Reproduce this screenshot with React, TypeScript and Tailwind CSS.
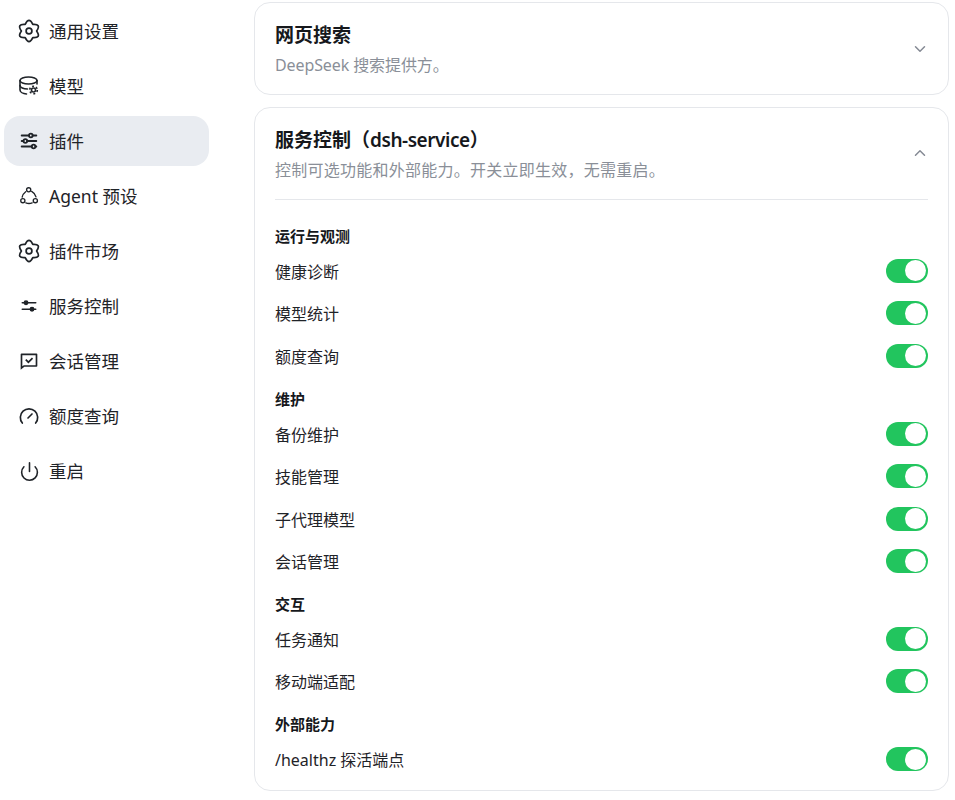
import { ChevronDown, ChevronUp, Power } from "lucide-react";
import { RiChatCheckLine } from "react-icons/ri";
import { TbAdjustmentsHorizontal } from "react-icons/tb";

function GearIcon() {
  return (
    <svg viewBox="0 0 24 24" width="24" height="24" fill="none" stroke="currentColor" strokeWidth="1.7" strokeLinejoin="round">
      <path d="M15.8 5.4Q24.6 4.75 19.6 12Q24.6 19.25 15.8 18.6Q12 26.5 8.2 18.6Q-0.6 19.25 4.4 12Q-0.6 4.75 8.2 5.4Q12 -2.5 15.8 5.4Z" />
      <circle cx="12" cy="12" r="2.9" />
    </svg>
  );
}

function ModelIcon() {
  return (
    <svg viewBox="0 0 24 24" width="24" height="24" fill="none" stroke="currentColor" strokeWidth="1.6" strokeLinecap="round">
      <ellipse cx="11.5" cy="6.5" rx="8.5" ry="3.5" />
      <path d="M3 6.5V16c0 2 3 3.7 6.5 4" />
      <path d="M3 11.5c0 2 3.5 3.5 7.5 3.5" />
      <path d="M20 6.5V10" />
      <circle cx="16.5" cy="16" r="2" />
      <circle cx="16.5" cy="16" r="3.8" strokeDasharray="2 2" strokeLinecap="butt" />
    </svg>
  );
}

function AgentIcon() {
  return (
    <svg viewBox="0 0 24 24" width="20" height="20" fill="none" stroke="currentColor" strokeWidth="1.6" strokeLinecap="round">
      <circle cx="11.6" cy="4.6" r="2.5" />
      <circle cx="4.6" cy="17.6" r="2.5" />
      <circle cx="19.6" cy="17.6" r="2.5" />
      <path d="M8 6.8C5.6 8.6 4.2 10.8 3.8 13.4" />
      <path d="M15.2 6.4C18 8 19.8 10.4 20.4 13" />
      <path d="M8.2 20.2C10.6 21.2 13.4 21.2 15.8 20.2" />
    </svg>
  );
}

function ServiceIcon() {
  return (
    <svg viewBox="0 0 24 24" width="18" height="18" fill="currentColor" stroke="currentColor" strokeWidth="2" strokeLinecap="round">
      <path d="M3 7.7h18M3 16.3h18" fill="none" />
      <circle cx="8" cy="7.7" r="3.3" stroke="none" />
      <circle cx="16" cy="16.3" r="3.3" stroke="none" />
    </svg>
  );
}

function GaugeIcon() {
  return (
    <svg viewBox="0 0 24 24" width="20" height="20" fill="none" stroke="currentColor" strokeWidth="2" strokeLinecap="round">
      <path d="M4 20.4A10.4 10.4 0 1 1 20 20.4" />
      <path d="M10.8 14.4L15.6 9.6" />
    </svg>
  );
}

const navItems = [
  { label: "通用设置", icon: <GearIcon /> },
  { label: "模型", icon: <ModelIcon /> },
  { label: "插件", icon: <TbAdjustmentsHorizontal size={22} />, active: true },
  { label: "Agent 预设", icon: <AgentIcon /> },
  { label: "插件市场", icon: <GearIcon /> },
  { label: "服务控制", icon: <ServiceIcon /> },
  { label: "会话管理", icon: <RiChatCheckLine size={20} /> },
  { label: "额度查询", icon: <GaugeIcon /> },
  { label: "重启", icon: <Power size={21} strokeWidth={1.8} /> },
];

const sections = [
  { title: "运行与观测", rows: ["健康诊断", "模型统计", "额度查询"] },
  { title: "维护", rows: ["备份维护", "技能管理", "子代理模型", "会话管理"] },
  { title: "交互", rows: ["任务通知", "移动端适配"] },
  { title: "外部能力", rows: ["/healthz 探活端点"] },
];

function Toggle() {
  return (
    <span className="flex h-[24px] w-[42px] items-center justify-end rounded-full bg-[#22c55e] pr-[2px]">
      <span className="h-[21px] w-[21px] rounded-full bg-white" />
    </span>
  );
}

export default function App() {
  return (
    <div className="flex h-[800px] overflow-hidden bg-white font-['Noto_Sans','Noto_Sans_CJK_SC',sans-serif] text-[#1f2328]">
      <aside className="flex w-[209px] shrink-0 flex-col gap-[5px] pl-1 pt-[6px]">
        {navItems.map((item) => (
          <div
            key={item.label}
            className={`flex h-[50px] items-center rounded-2xl pl-[15px] ${item.active ? "bg-[#e9ecf1]" : ""}`}
          >
            <span className="flex w-[20px] justify-center [&>svg]:shrink-0">{item.icon}</span>
            <span className="ml-[10px] text-[17.5px]">{item.label}</span>
          </div>
        ))}
      </aside>

      <main className="ml-[45px] flex w-[695px] flex-col gap-3 pt-[2px]">
        <section className="flex h-[93px] items-center justify-between rounded-2xl border border-[#e5e7eb] pl-5 pr-5">
          <div>
            <h2 className="text-[19px] font-semibold leading-[26px] text-[#16181c]">网页搜索</h2>
            <p className="mt-[6px] text-[16px] leading-[22px] tracking-[-0.1px] text-[#8a8f98]">DeepSeek 搜索提供方。</p>
          </div>
          <ChevronDown size={18} className="-mr-px text-[#858a94]" />
        </section>

        <section className="h-[684px] rounded-2xl border border-[#e5e7eb] px-5 pt-[19px]">
          <div className="flex h-[73px] items-start justify-between border-b border-[#e5e7eb]">
            <div>
              <h2 className="text-[19px] font-semibold leading-[26px] text-[#16181c]">
                服务控制（<span className="tracking-[-0.45px]">dsh-service</span>）
              </h2>
              <p className="mt-[6px] text-[16px] leading-[22px] tracking-[0.25px] text-[#8a8f98]">控制可选功能和外部能力。开关立即生效，无需重启。</p>
            </div>
            <ChevronUp size={18} className="-mr-px mt-[17px] text-[#858a94]" />
          </div>
          <div className="mt-[24px] flex flex-col gap-[9.75px]">
            {sections.map((section) => (
              <div key={section.title}>
                <h3 className="text-[15px] font-bold leading-[25.5px] text-[#16181c]">{section.title}</h3>
                {section.rows.map((row) => (
                  <div key={row} className="flex h-[42.5px] items-center justify-between text-[16px]">
                    <span className="translate-y-[1px]">{row}</span>
                    <Toggle />
                  </div>
                ))}
              </div>
            ))}
          </div>
        </section>
      </main>
    </div>
  );
}
